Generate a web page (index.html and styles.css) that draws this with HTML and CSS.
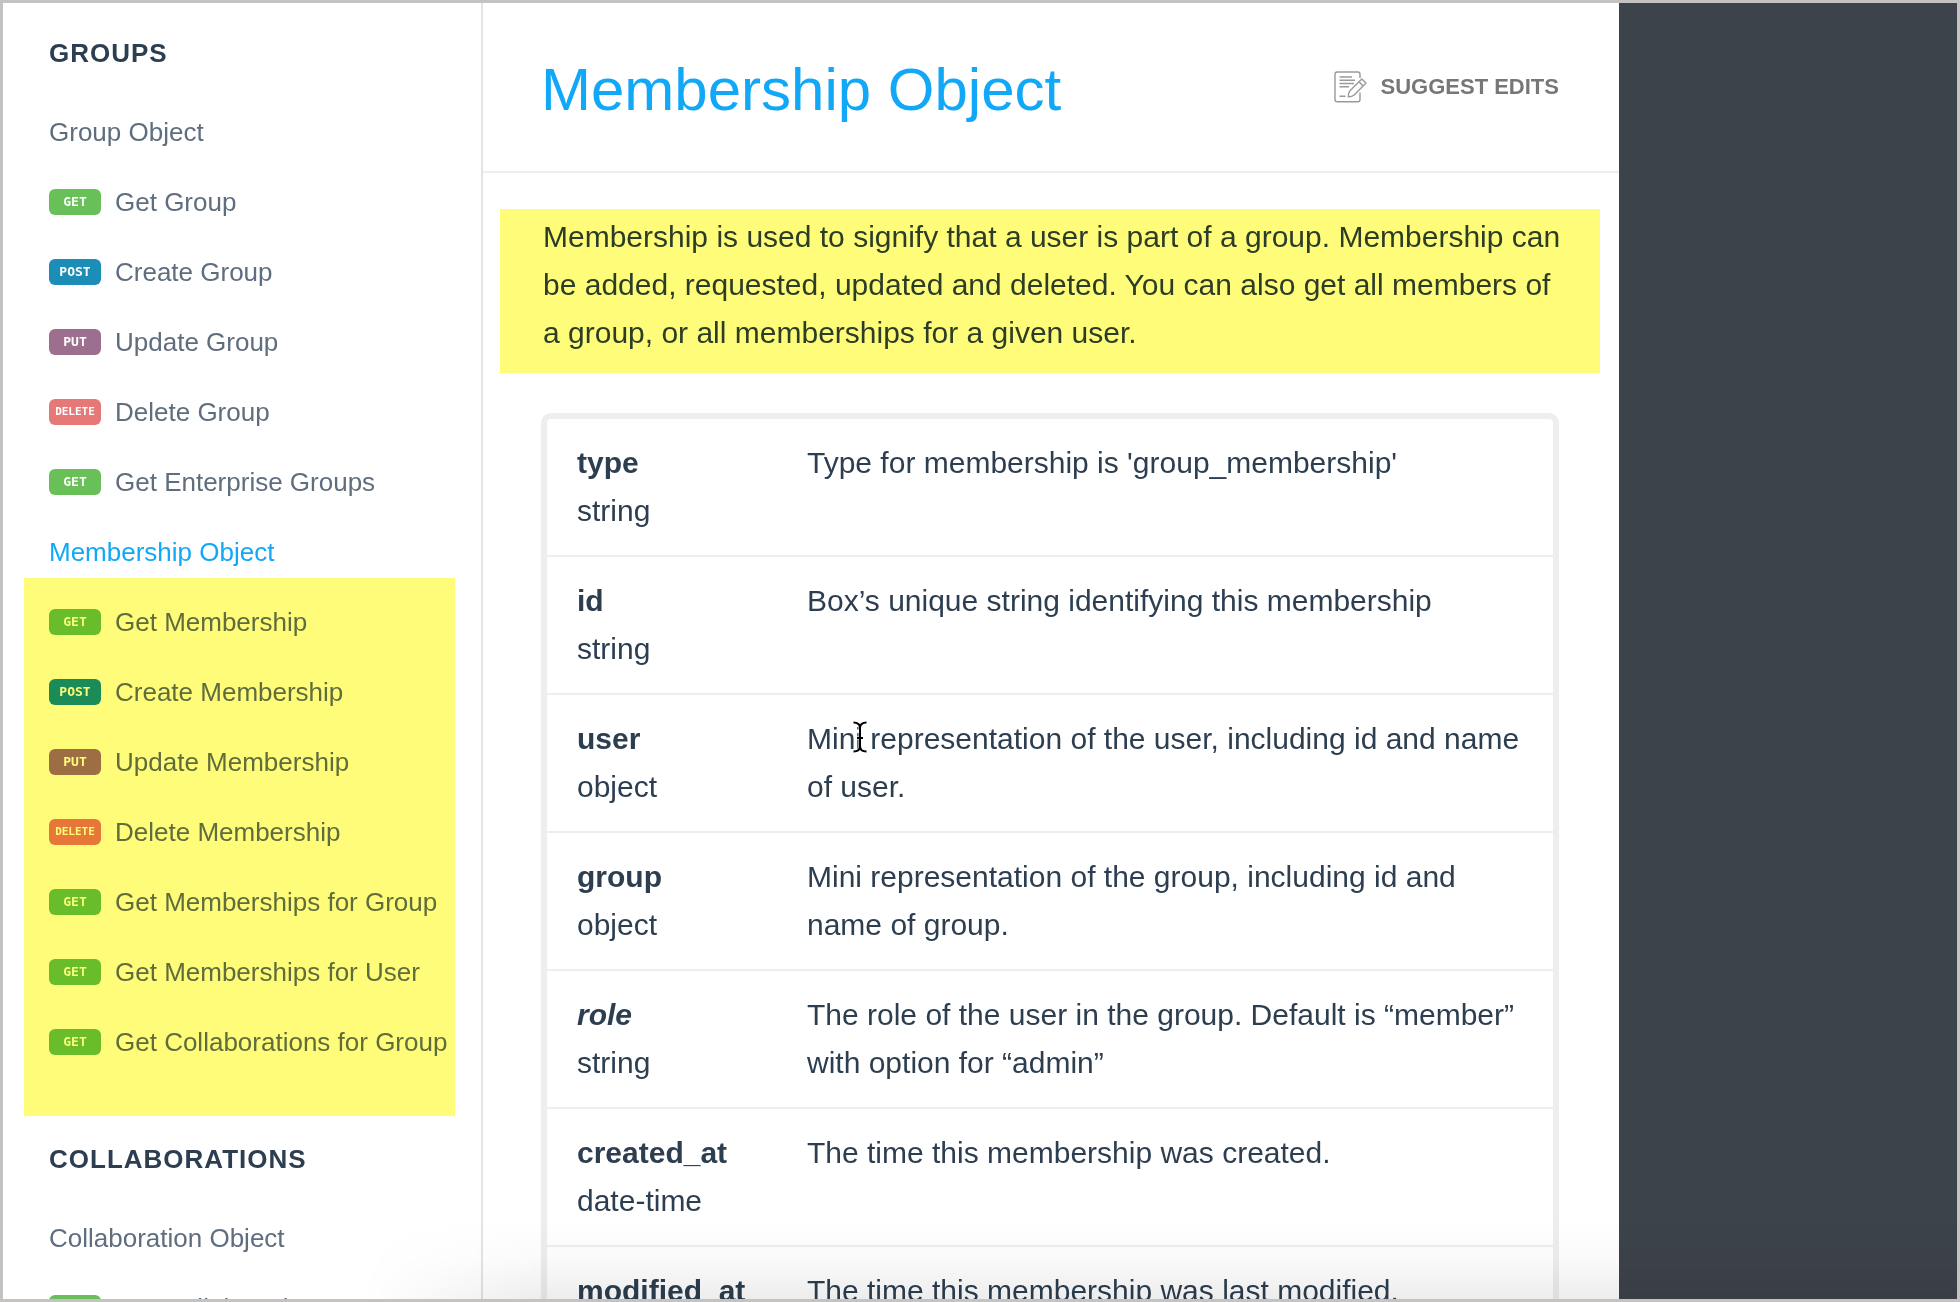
FILE: index.html
```html
<!DOCTYPE html>
<html lang="en">
<head>
<meta charset="utf-8">
<meta name="viewport" content="width=device-width, initial-scale=1">
<title>Membership Object</title>
<link rel="stylesheet" href="styles.css">
</head>
<body>
<div class="shell">
  <nav class="sidebar" aria-label="API reference">
    <section class="nav-section">
      <h2 class="nav-title">GROUPS</h2>
      <ul class="nav-list">
        <li><a class="nav-link" href="#group-object">Group Object</a></li>
        <li><a class="nav-link" href="#get-group"><span class="verb verb-get">GET</span>Get Group</a></li>
        <li><a class="nav-link" href="#create-group"><span class="verb verb-post">POST</span>Create Group</a></li>
        <li><a class="nav-link" href="#update-group"><span class="verb verb-put">PUT</span>Update Group</a></li>
        <li><a class="nav-link" href="#delete-group"><span class="verb verb-delete">DELETE</span>Delete Group</a></li>
        <li><a class="nav-link" href="#get-enterprise-groups"><span class="verb verb-get">GET</span>Get Enterprise Groups</a></li>
        <li>
          <a class="nav-link active" href="#membership-object" aria-current="page">Membership Object</a>
          <ul class="nav-list marked">
            <li><a class="nav-link" href="#get-membership"><span class="verb verb-get">GET</span>Get Membership</a></li>
            <li><a class="nav-link" href="#create-membership"><span class="verb verb-post">POST</span>Create Membership</a></li>
            <li><a class="nav-link" href="#update-membership"><span class="verb verb-put">PUT</span>Update Membership</a></li>
            <li><a class="nav-link" href="#delete-membership"><span class="verb verb-delete">DELETE</span>Delete Membership</a></li>
            <li><a class="nav-link" href="#memberships-for-group"><span class="verb verb-get">GET</span>Get Memberships for Group</a></li>
            <li><a class="nav-link" href="#memberships-for-user"><span class="verb verb-get">GET</span>Get Memberships for User</a></li>
            <li><a class="nav-link" href="#collaborations-for-group"><span class="verb verb-get">GET</span>Get Collaborations for Group</a></li>
          </ul>
        </li>
      </ul>
    </section>
    <section class="nav-section">
      <h2 class="nav-title">COLLABORATIONS</h2>
      <ul class="nav-list">
        <li><a class="nav-link" href="#collaboration-object">Collaboration Object</a></li>
        <li><a class="nav-link" href="#get-collaboration"><span class="verb verb-get">GET</span>Get Collaboration</a></li>
      </ul>
    </section>
  </nav>

  <main class="content">
    <header class="page-header">
      <h1 class="page-title">Membership Object</h1>
      <a class="suggest" href="#suggest-edits">
        <svg class="suggest-icon" width="34" height="32" viewBox="0 0 34 32" fill="none" stroke="#9a9a9a" stroke-width="1.4" stroke-linejoin="round" aria-hidden="true">
          <path d="M26 7V3.200Q26 1 23.800 1H3.200Q1 1 1 3.200V28.600Q1 30.800 3.200 30.800H23.800Q26 30.800 26 28.600V21.500"/>
          <path d="M5.500 6H18M5.500 9.200H21M5.500 12.500H20M5.500 15.700H15M5.500 25.300H11.500" stroke-width="1.500"/>
          <path d="M14.300 25.800Q14.200 22 16 19.800L27.800 7.900L32 12L20.200 24Q18 25.800 14.300 25.800ZM25 10.800L29.200 15"/>
        </svg>
        SUGGEST EDITS
      </a>
    </header>

    <p class="intro">Membership is used to signify that a user is part of a group. Membership can be added, requested, updated and deleted. You can also get all members of a group, or all memberships for a given user.</p>

    <div class="fields">
      <table class="field-table">
        <tbody>
          <tr><th scope="row">type<span class="kind">string</span></th><td>Type for membership is 'group_membership'</td></tr>
          <tr><th scope="row">id<span class="kind">string</span></th><td>Box’s unique string identifying this membership</td></tr>
          <tr>
            <th scope="row">user<span class="kind">object</span></th>
            <td>Mini representation of the user, including id and name of user.
              <svg class="ibeam" width="16" height="32" viewBox="0 0 16 32" fill="none" aria-hidden="true">
                <path d="M1.500 1.500Q8 1.500 8 7V25Q8 30.500 1.500 30.500M14.500 1.500Q8 1.500 8 7M8 25Q8 30.500 14.500 30.500M5 17H11" stroke="#fff" stroke-width="3"/>
                <path d="M1.500 1.500Q8 1.500 8 7V25Q8 30.500 1.500 30.500M14.500 1.500Q8 1.500 8 7M8 25Q8 30.500 14.500 30.500M5 17H11" stroke="#000" stroke-width="2"/>
              </svg>
            </td>
          </tr>
          <tr><th scope="row">group<span class="kind">object</span></th><td>Mini representation of the group, including id and name of group.</td></tr>
          <tr><th scope="row"><em>role</em><span class="kind">string</span></th><td>The role of the user in the group. Default is “member” with option for “admin”</td></tr>
          <tr><th scope="row">created_at<span class="kind">date-time</span></th><td>The time this membership was created.</td></tr>
          <tr><th scope="row">modified_at<span class="kind">date-time</span></th><td>The time this membership was last modified.</td></tr>
        </tbody>
      </table>
    </div>
  </main>

  <aside class="code-pane" aria-label="Examples"></aside>
  <div class="bottom-shade"></div>
</div>
</body>
</html>
```
FILE: styles.css
```css
*,
*::before,
*::after {
  box-sizing: border-box;
}

body {
  margin: 0;
  background: #fff;
  color: #2c3e50;
  font-family: "Liberation Sans", Helvetica, Arial, sans-serif;
  font-size: 30px;
  line-height: 48px;
}

.shell {
  position: relative;
  display: flex;
  height: 100vh;
  border: 3px solid #c5c3c1;
  overflow: hidden;
}

/* Sidebar */

.sidebar {
  flex: none;
  width: 480px;
  padding: 28px 26px 0 46px;
  border-right: 2px solid #e3e3e3;
  overflow: hidden;
}

.nav-section + .nav-section {
  margin-top: 60px;
}

.nav-title {
  margin: 0 0 22px;
  font-size: 26px;
  line-height: 44px;
  letter-spacing: 1px;
}

.nav-list {
  margin: 0;
  padding: 0;
  list-style: none;
}

.nav-link {
  display: flex;
  align-items: center;
  gap: 14px;
  height: 70px;
  color: #5f6e7f;
  font-size: 26px;
  text-decoration: none;
  white-space: nowrap;
}

.nav-link.active {
  color: #12a8f8;
}

.verb {
  flex: none;
  width: 52px;
  border-radius: 6px;
  color: #fff;
  font: bold 13px/26px "DejaVu Sans Mono", monospace;
  text-align: center;
}

.verb-get {
  background: #69bf58;
}

.verb-post {
  background: #1b8db6;
}

.verb-put {
  background: #9d6f8e;
}

.verb-delete {
  background: #e67878;
  font-size: 11px;
}

/* Highlighter laid over a list, tinting what is under it */
.marked {
  position: relative;
}

.marked::after {
  content: "";
  position: absolute;
  inset: -9px 0 -39px -25px;
  background: #fffc79;
  mix-blend-mode: multiply;
  pointer-events: none;
}

/* Main column */

.content {
  flex: 1;
  min-width: 0;
  overflow: hidden;
}

.page-header {
  display: flex;
  align-items: center;
  justify-content: space-between;
  padding: 51px 60px 45px 58px;
  border-bottom: 2px solid #eee;
}

.page-title {
  margin: 0;
  color: #12a8f8;
  font-size: 60px;
  font-weight: normal;
  line-height: 72px;
}

.suggest {
  display: flex;
  align-items: center;
  gap: 13px;
  margin-bottom: 6px;
  color: #777;
  font-size: 22px;
  font-weight: bold;
  text-decoration: none;
  white-space: nowrap;
}

.intro {
  margin: 36px 19px 40px 17px;
  padding: 4px 34px 16px 43px;
  background: #fffc79;
  color: #2b3d26;
}

.fields {
  margin: 0 60px 60px 58px;
  border: 6px solid #eee;
  border-radius: 10px;
}

.field-table {
  width: 100%;
  border-collapse: collapse;
}

.field-table tr + tr {
  border-top: 2px solid #eee;
}

.field-table th,
.field-table td {
  vertical-align: top;
  text-align: left;
}

.field-table th {
  width: 260px;
  padding: 20px 30px;
}

.field-table td {
  position: relative;
  padding: 20px 30px 20px 0;
}

.kind {
  display: block;
  font-weight: normal;
}

.ibeam {
  position: absolute;
  top: 26px;
  left: 45px;
}

/* Right column */

.code-pane {
  flex: none;
  width: 338px;
  background: #3d434a;
}

.bottom-shade {
  position: absolute;
  right: 0;
  bottom: 0;
  left: 360px;
  height: 80px;
  background: linear-gradient(to bottom, transparent, rgba(0, 0, 0, 0.02) 50%, rgba(0, 0, 0, 0.07));
  mask-image: linear-gradient(to right, transparent, #000 180px);
  pointer-events: none;
}
```
